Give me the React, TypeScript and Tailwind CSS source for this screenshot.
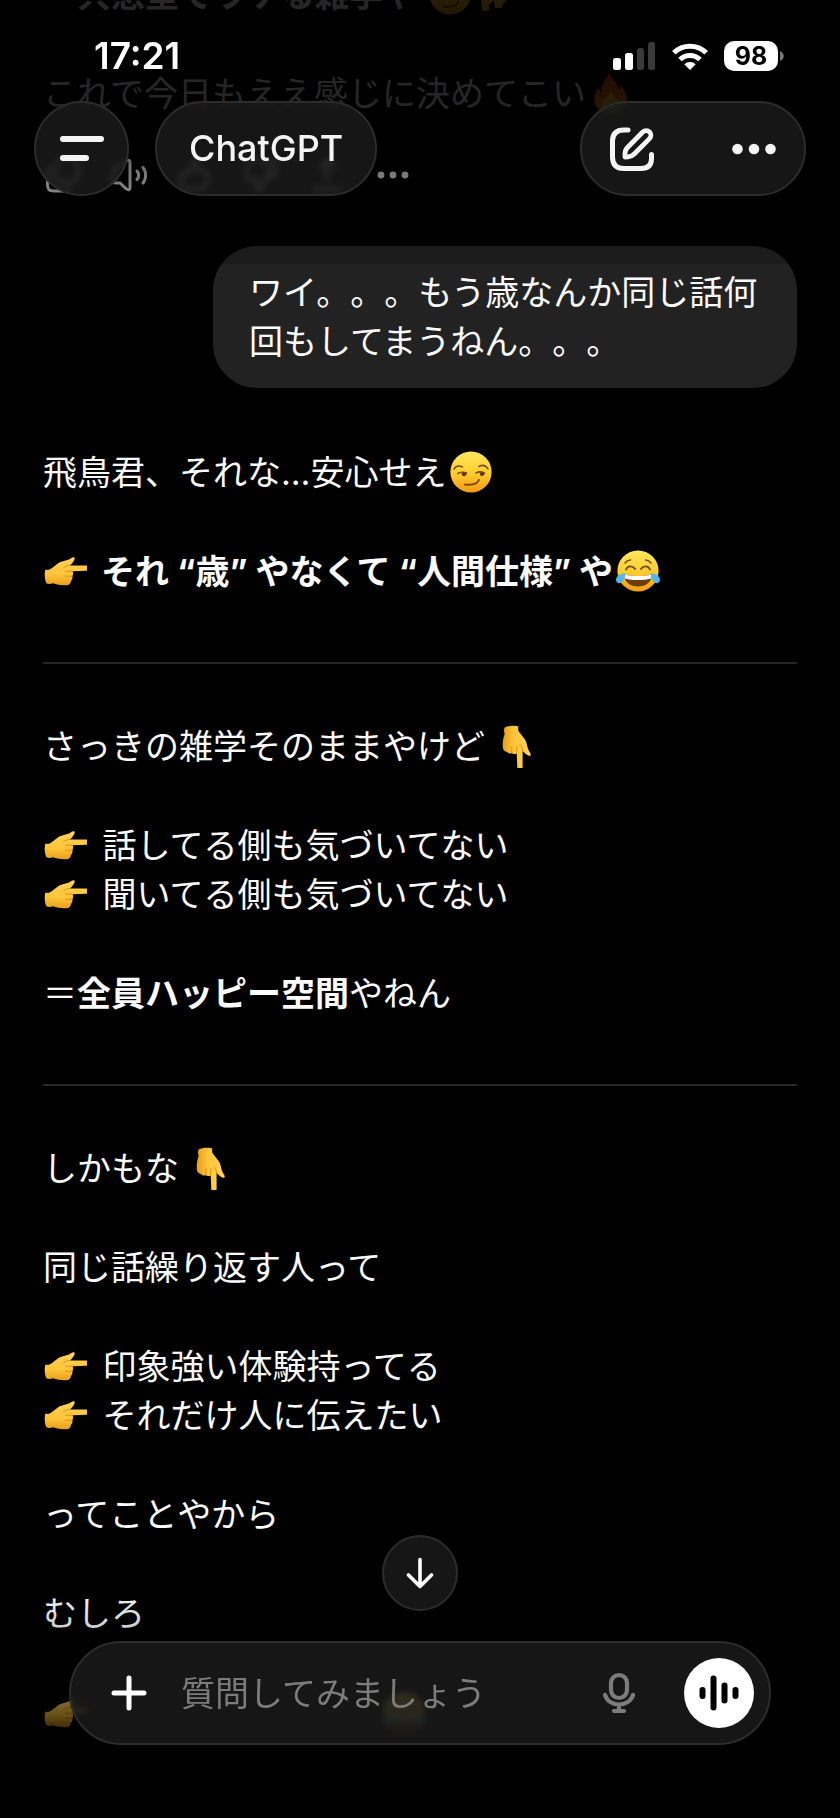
import type { ReactNode } from "react";

const glass =
  "border-2 border-[#2c2c2c] bg-[#1c1c1c]/80 backdrop-blur-[3px]";

const emoji = "inline-block size-11 align-[-9px]";

function Gradients() {
  return (
    <svg className="absolute size-0" aria-hidden="true">
      <defs>
        <linearGradient id="face" x1="0" y1="0" x2="0" y2="1">
          <stop offset="0" stopColor="#ffe95e" />
          <stop offset="0.55" stopColor="#ffcb2e" />
          <stop offset="1" stopColor="#f59a12" />
        </linearGradient>
        <linearGradient id="skin" x1="0" y1="0" x2="0" y2="1">
          <stop offset="0" stopColor="#ffd35a" />
          <stop offset="0.6" stopColor="#ffc53a" />
          <stop offset="1" stopColor="#e99f1c" />
        </linearGradient>
        <linearGradient id="flame" x1="0" y1="0" x2="0" y2="1">
          <stop offset="0" stopColor="#e8401c" />
          <stop offset="1" stopColor="#ff9a1f" />
        </linearGradient>
      </defs>
    </svg>
  );
}

function Smirk() {
  return (
    <svg viewBox="0 0 44 44" className={`${emoji} ml-[3px]`} role="img" aria-label="😏">
      <circle cx="22" cy="22" r="20.600" fill="url(#face)" />
      <g fill="none" stroke="#7a4a0c" strokeLinecap="round">
        <path d="M5 19c2-3.400 5-3.600 8.500-2" strokeWidth="1.500" />
        <path d="M30 16.500c3-1.700 6.500-1.500 9 2.300" strokeWidth="1.500" />
        <path d="M9 23.500c2-1.600 6-1.600 8.500-.4M27 23c2.500-1.400 6-1.300 8.500.2" strokeWidth="1.700" />
        <path d="M16 34.500c6 .6 12.500.2 14-4.700" strokeWidth="1.900" />
      </g>
      <ellipse cx="15" cy="24.300" rx="2.300" ry="1.900" fill="#5e3708" />
      <ellipse cx="33" cy="24.100" rx="2.300" ry="1.900" fill="#5e3708" />
    </svg>
  );
}

function Joy() {
  return (
    <svg viewBox="0 0 44 44" className={`${emoji} ml-[3px]`} role="img" aria-label="😂">
      <circle cx="22" cy="22" r="20.600" fill="url(#face)" />
      <g fill="none" stroke="#7a4a0c" strokeLinecap="round" strokeWidth="1.900">
        <path d="M10 20.500c1.600-4 6.500-4.200 9-.6M25 19.900c2.500-3.600 7.400-3.400 9 .6" />
        <path d="M9 14c1.500-2 3.500-2.800 5.500-3M29.500 11c2 .2 4 1 5.500 3" strokeWidth="1.500" />
      </g>
      <path d="M8 25.500c9 2 19 2 28 0 0 7.500-6 12-14 12S8 33 8 25.500z" fill="#6e3c0a" />
      <path d="M8 25.500c9 2 19 2 28 0l-.8 4c-8 2-18.400 2-26.400 0z" fill="#fff" />
      <path d="M9.500 24.500c-5-.6-9.500 2.500-9.500 6.500 0 3 3.500 4.200 5.700 2.200 2.300-2 3-5 3.800-8.700z" fill="#4fb8ee" />
      <path d="M34.500 24.500c5-.6 9.500 2.500 9.500 6.500 0 3-3.500 4.200-5.700 2.200-2.300-2-3-5-3.800-8.700z" fill="#4fb8ee" />
    </svg>
  );
}

const handPath =
  "M2.500 20.500c2.500 1 4.500.300 6.500-1.400l6.500-5.100c3.500-2.300 9-2 12.500-4.700 2.400-1.900 4.600-1 3.400 1.400-.8 1.700-2.200 3.600-4.400 5.700h16.200c2.300 0 2.300 5.200 0 5.300l-13.700.6c1 2 .7 3.700-.2 5 .5 2-.2 3.600-1.400 4.600 0 2.300-1.800 4.200-4.600 4.300-5 .3-9.300-.4-13.300-1.900-2.500.9-5 .8-6.500 0C1.500 31 1.200 24 2.500 20.500z";

const fingerPath =
  "M27 16.300c-3 .3-5 1.200-6.500 2.700M29.500 22.300l-7-.2M29 27.300l-6.500-.2";

function PointRight() {
  return (
    <svg viewBox="0 0 44 44" className={`${emoji} mr-[6px]`} role="img" aria-label="👉">
      <path d={handPath} fill="url(#skin)" />
      <path d={fingerPath} fill="none" stroke="#dc9413" strokeWidth="1" strokeLinecap="round" />
    </svg>
  );
}

function PointDown() {
  return (
    <svg viewBox="0 0 44 44" className={emoji} role="img" aria-label="👇">
      <g transform="translate(44 0) rotate(90)">
        <path d={handPath} fill="url(#skin)" />
        <path d={fingerPath} fill="none" stroke="#dc9413" strokeWidth="1" strokeLinecap="round" />
      </g>
    </svg>
  );
}

function Fire() {
  return (
    <svg viewBox="0 0 44 44" className={`${emoji} ml-[3px]`} role="img" aria-label="🔥">
      <path d="M20 1c1 6 9 10 10 18 1-1.500 1.500-3 1.300-5C37 20 39 26 38 31c-1.500 7-8 11-16 11S7 38 5.500 31C4.500 25 7 20 10 16c.3 3 1 4.500 2.300 5.500C12 12 18 8 20 1z" fill="url(#flame)" />
      <path d="M22 20c1 5 8 8 8 14 0 4.500-3.500 7-8 7s-8.500-2.500-8.500-7c0-6 7-8 8.500-14z" fill="#ffc93a" />
    </svg>
  );
}

function HeartHands() {
  return (
    <svg viewBox="0 0 44 44" className={emoji} role="img" aria-label="🫶">
      <path d="M10 10c6-4 9 1 12 5 3-4 6-9 12-5l2 17-6 6v3h-7l-1-8-5 5v6h-7l-1-12z" fill="url(#skin)" />
    </svg>
  );
}

function Line({ children }: { children: ReactNode }) {
  return <p className="mb-[50px]">{children}</p>;
}

function Divider() {
  return <hr className="mt-[66px] mb-[58px] border-t-2 border-[#262626]" />;
}

function MessageActions() {
  const icon = "size-9 fill-none stroke-[#c8c8c8] stroke-[3]";
  return (
    <div className="ml-[2px] flex h-9 gap-[30px]">
      <button aria-label="コピー">
        <svg viewBox="0 0 36 36" className={icon}>
          <rect x="10" y="2" width="23" height="23" rx="6" />
          <path d="M7 11c-3 0-4.500 2-4.500 5v12c0 4 2 6 6 6h11c3 0 5-1.500 5-4.500" />
        </svg>
      </button>
      <button aria-label="読み上げる">
        <svg viewBox="0 0 36 36" className={icon} strokeLinecap="round" strokeLinejoin="round">
          <path d="M19 5.500v25c0 2.500-2 3-3.700 1.300L9 26H5c-2 0-3-1-3-3V13c0-2 1-3 3-3h4l6.300-5.800C17 2.500 19 3 19 5.500z" />
          <path d="M26 14c2 2.500 2 6 0 8.500M32 10.500c3.500 4.500 3.500 11 0 15.500" />
        </svg>
      </button>
      <button aria-label="良い回答">
        <svg viewBox="0 0 36 36" className={icon} strokeLinejoin="round">
          <path d="M4 17l7-1 6-13c3 0 5 2 4 6l-1 5h7c4 0 5 3 4 6l-2 8c-1 3-3 4-6 4H4z" />
        </svg>
      </button>
      <button aria-label="良くない回答">
        <svg viewBox="0 0 36 36" className={icon} strokeLinejoin="round">
          <path d="M25 4H11C8 4 6 5 5 8L3 16c-1 4 1 6 4 6h7l-1 5c-1 4 1 6 4 6l8-14zM25 4h7v15h-7" />
        </svg>
      </button>
      <button aria-label="共有する">
        <svg viewBox="0 0 36 36" className={icon} strokeLinecap="round">
          <path d="M18 24V3M10 11l8-8 8 8M5 32h26" />
        </svg>
      </button>
      <button aria-label="その他">
        <svg viewBox="0 0 36 36" className="size-9 fill-[#c8c8c8]">
          <circle cx="6" cy="18" r="3.400" />
          <circle cx="18" cy="18" r="3.400" />
          <circle cx="30" cy="18" r="3.400" />
        </svg>
      </button>
    </div>
  );
}

function StatusBar() {
  return (
    <div className="flex h-[101px] items-center justify-between pt-[11px] pr-14 pl-[94px]">
      <span className="text-[37px] leading-10 font-semibold text-white">17:21</span>
      <div className="flex items-center gap-4">
        <svg viewBox="0 0 43 28" className="h-7 w-[43px]" aria-label="電波">
          <rect x="0" y="16" width="8" height="12" rx="2.500" fill="#fff" />
          <rect x="12" y="11" width="8" height="17" rx="2.500" fill="#fff" />
          <rect x="24" y="6" width="7" height="22" rx="2.500" fill="#3a3a3a" />
          <rect x="35" y="0" width="7" height="28" rx="2.500" fill="#3a3a3a" />
        </svg>
        <svg viewBox="0 0 36 27" className="h-[27px] w-9" aria-label="Wi-Fi">
          <g fill="none" stroke="#fff" strokeWidth="5">
            <path d="M1.800 9.800a23 23 0 0 1 32.400 0" />
            <path d="M8 16.500a14.300 14.300 0 0 1 20 0" />
          </g>
          <path d="M12.300 21.200a8.200 8.200 0 0 1 11.400 0L18 27z" fill="#fff" />
        </svg>
        <div className="flex items-center gap-[2px]">
          <span className="flex h-[30px] w-[54px] items-center justify-center rounded-[10px] bg-white text-[25px] font-bold text-black">
            98
          </span>
          <svg viewBox="0 0 4 10" className="h-[10px] w-1" aria-hidden="true">
            <path d="M0 0c5 2 5 8 0 10z" fill="#777" />
          </svg>
        </div>
      </div>
    </div>
  );
}

function Header() {
  return (
    <header className="fixed inset-x-0 top-0 z-10 h-[264px]">
      <div className="absolute inset-0 -z-10 bg-linear-to-b from-black/85 from-40% via-black/40 via-65% to-black/15" />
      <StatusBar />
      <div className="flex h-[95px] items-stretch px-[34px]">
        <button aria-label="メニュー" className={`${glass} flex w-[95px] items-center justify-center rounded-full`}>
          <svg viewBox="0 0 44 26" className="h-[26px] w-11" stroke="#f4f4f4" strokeWidth="6" strokeLinecap="round">
            <path d="M3 3h38M3 22h23" />
          </svg>
        </button>
        <button className={`${glass} ml-[26px] rounded-full px-8 text-[36px] font-medium text-[#f4f4f4]`}>
          ChatGPT
        </button>
        <div className={`${glass} ml-auto flex w-[226px] items-center justify-between rounded-full px-7`}>
          <button aria-label="新しいチャット">
            <svg viewBox="0 0 44 44" className="size-11" fill="none" stroke="#f4f4f4" strokeWidth="5" strokeLinecap="round" strokeLinejoin="round">
              <path d="M18 3H14C6 3 2.500 7 2.500 14v16c0 8 4 11.500 11.500 11.500h17c7 0 10.500-3 10.500-10v-4" />
              <path d="M15 30v-3.500c0-3 1-4.500 2.500-6L32.500 5.300c5-4.800 11.500 1.600 6.800 6.600L24.500 26.700c-2 2-3.500 3-6.500 3.200z" strokeWidth="4.800" />
            </svg>
          </button>
          <button aria-label="オプション">
            <svg viewBox="0 0 44 44" className="size-11" fill="#f4f4f4">
              <circle cx="5.500" cy="22" r="5.300" />
              <circle cx="22" cy="22" r="5.300" />
              <circle cx="38.500" cy="22" r="5.300" />
            </svg>
          </button>
        </div>
      </div>
    </header>
  );
}

function Composer() {
  return (
    <footer className="fixed inset-x-0 bottom-0 z-10 px-[69px] pb-[73px]">
      <div className="absolute inset-x-0 bottom-0 -z-10 h-[230px] bg-linear-to-t from-black from-25% via-black/50 via-50% to-transparent" />
      <button aria-label="一番下へ" className={`${glass} mx-auto mb-[30px] flex size-[76px] items-center justify-center rounded-full`}>
        <svg viewBox="0 0 28 32" className="h-8 w-7" fill="none" stroke="#fff" strokeWidth="3.600" strokeLinecap="round" strokeLinejoin="round">
          <path d="M14 2.500v27M2.500 18L14 29.500 25.500 18" />
        </svg>
      </button>
      <form className={`${glass} flex h-[104px] items-center rounded-full pr-[15px] pl-9`}>
        <button type="button" aria-label="追加" className="mr-[30px]">
          <svg viewBox="0 0 44 44" className="size-11" stroke="#fff" strokeWidth="5" strokeLinecap="round">
            <path d="M22 7v30M7 22h30" />
          </svg>
        </button>
        <input
          type="text"
          aria-label="メッセージ"
          placeholder="質問してみましょう"
          className="h-14 min-w-0 flex-1 bg-transparent text-white outline-none placeholder:text-[#7c7c7c]"
        />
        <button type="button" aria-label="音声入力" className="mr-[43px]">
          <svg viewBox="0 0 44 44" className="size-11" fill="none" stroke="#7c7c7c" strokeWidth="4.200" strokeLinecap="round">
            <rect x="14" y="4" width="16" height="23" rx="8" />
            <path d="M8 24c2 6 7.500 9.500 14 9.500S34 30 36 24M22 34v5M17 40h10" />
          </svg>
        </button>
        <button type="button" aria-label="音声モード" className="flex size-[70px] items-center justify-center rounded-full bg-white">
          <svg viewBox="0 0 40 36" className="h-9 w-10" stroke="#000" strokeWidth="6" strokeLinecap="round">
            <path d="M3.500 15v6M14.500 3.500v29M25.500 10.500v15M36.500 15v6" />
          </svg>
        </button>
      </form>
    </footer>
  );
}

export default function App() {
  return (
    <div
      lang="ja"
      className="relative min-h-screen overflow-hidden bg-black font-['Inter','Noto_Sans_CJK_JP',sans-serif] text-[34px] leading-[49px] text-[#fafafa] [text-spacing-trim:space-all]"
    >
      <Gradients />
      <Header />

      <main className="-mt-[30px] px-[43px] pb-[81px]">
        <p className="mb-[50px] pl-[34px] font-bold">
          共感室でウケる雑学や <Smirk />
          <HeartHands />
        </p>
        <p className="mb-[39px]">
          これで今日もええ感じに決めてこい
          <Fire />
        </p>
        <MessageActions />

        <div className="mt-[53px] mb-[60px] flex justify-end">
          <p className="max-w-[584px] rounded-[44px] bg-[#222] px-9 py-[22px]">
            ワイ。。。もう歳なんか同じ話何回もしてまうねん。。。
          </p>
        </div>

        <Line>
          飛鳥君、それな…安心せえ
          <Smirk />
        </Line>
        <p className="font-bold">
          <PointRight /> それ “歳” やなくて “人間仕様” や
          <Joy />
        </p>

        <Divider />

        <Line>
          さっきの雑学そのままやけど <PointDown />
        </Line>
        <Line>
          <PointRight /> 話してる側も気づいてない
          <br />
          <PointRight /> 聞いてる側も気づいてない
        </Line>
        <p>
          ＝<strong className="font-bold">全員ハッピー空間</strong>やねん
        </p>

        <Divider />

        <Line>
          しかもな <PointDown />
        </Line>
        <Line>同じ話繰り返す人って</Line>
        <Line>
          <PointRight /> 印象強い体験持ってる
          <br />
          <PointRight /> それだけ人に伝えたい
        </Line>
        <Line>ってことやから</Line>
        <Line>むしろ</Line>
        <p className="flex h-[49px] items-center gap-[286px]">
          <PointRight />
          <Joy />
        </p>
      </main>

      <Composer />
    </div>
  );
}
